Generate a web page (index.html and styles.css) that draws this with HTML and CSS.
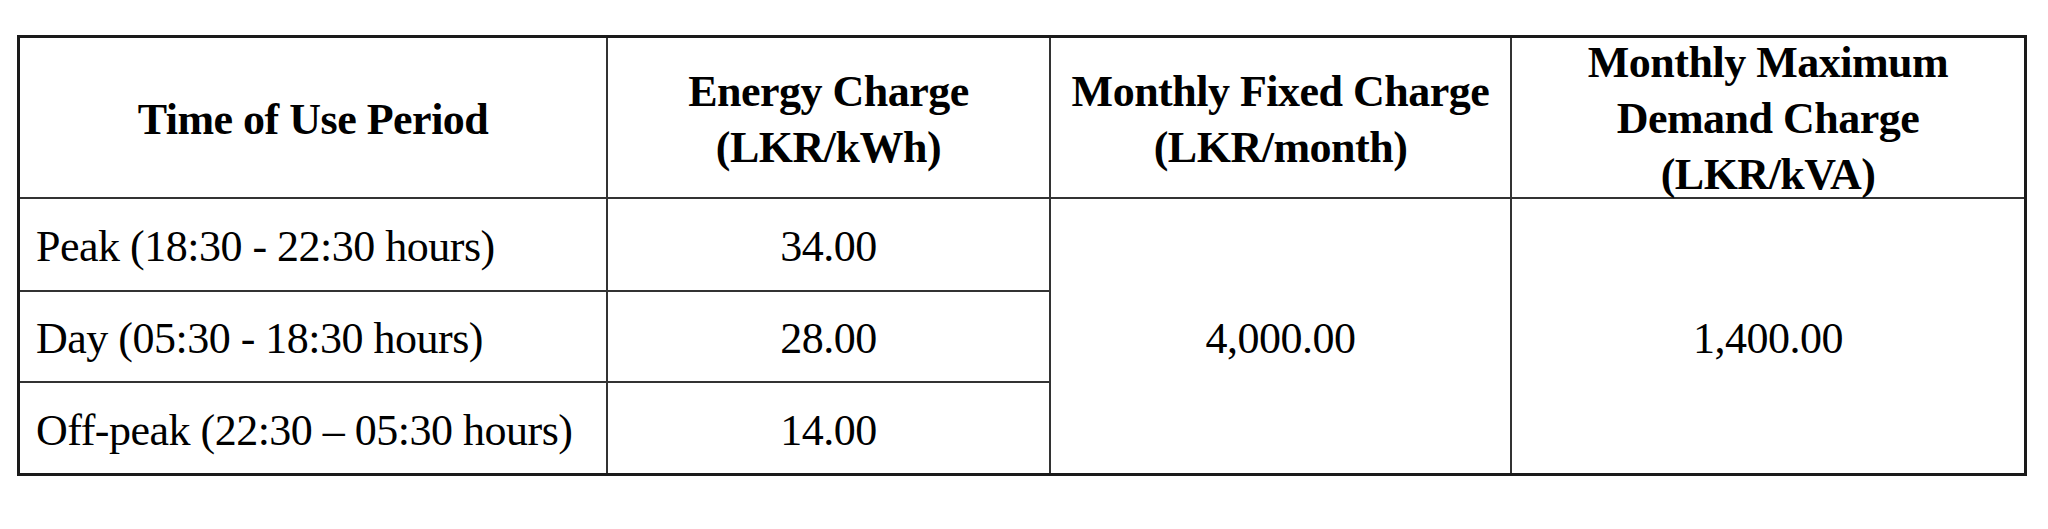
FILE: index.html
```html
<!DOCTYPE html>
<html lang="en">
<head>
<meta charset="utf-8">
<title>Time of Use Tariff</title>
<link rel="stylesheet" href="styles.css">
</head>
<body>
<div class="page">
  <div class="tariff">
    <div class="cell head col-a">Time of Use Period</div>
    <div class="cell head col-b">Energy Charge<br>(LKR/kWh)</div>
    <div class="cell head col-c">Monthly Fixed Charge<br>(LKR/month)</div>
    <div class="cell head col-d">Monthly Maximum<br>Demand Charge<br>(LKR/kVA)</div>

    <div class="cell period col-a r2">Peak (18:30 - 22:30 hours)</div>
    <div class="cell num col-b r2">34.00</div>
    <div class="cell num col-c merged">4,000.00</div>
    <div class="cell num col-d merged">1,400.00</div>

    <div class="cell period col-a r3">Day (05:30 - 18:30 hours)</div>
    <div class="cell num col-b r3">28.00</div>

    <div class="cell period col-a r4 last-row">Off-peak (22:30 – 05:30 hours)</div>
    <div class="cell num col-b r4 last-row">14.00</div>
  </div>
</div>
</body>
</html>
```

FILE: styles.css
```css
html, body {
  margin: 0;
  padding: 0;
  background: #ffffff;
}

.page {
  padding: 35px 0 0 17px;
}

.tariff {
  display: grid;
  width: 2010px;
  box-sizing: border-box;
  border: 3px solid #1a1a1a;
  grid-template-columns: 588px 443px 461px 512px;
  grid-template-rows: 161px 93px 91px 90px;
  font-family: "Liberation Serif", "Times New Roman", serif;
  font-size: 44px;
  letter-spacing: -0.5px;
  line-height: 56px;
  color: #000;
}

.cell {
  display: flex;
  align-items: center;
  justify-content: center;
  text-align: center;
  padding-top: 5px;
  border-right: 2px solid #333;
  border-bottom: 2px solid #333;
  min-width: 0;
  min-height: 0;
}

.head {
  font-weight: bold;
  grid-row: 1;
}

.head.col-d {
  padding-top: 2px;
}

.col-a { grid-column: 1; }
.col-b { grid-column: 2; }
.col-c { grid-column: 3; }
.col-d { grid-column: 4; border-right: none; }

.r2 { grid-row: 2; }
.r3 { grid-row: 3; }
.r4 { grid-row: 4; }

.merged {
  grid-row: 2 / 5;
  border-bottom: none;
}

.last-row {
  border-bottom: none;
}

.period {
  justify-content: flex-start;
  text-align: left;
  padding-left: 16px;
}
```
